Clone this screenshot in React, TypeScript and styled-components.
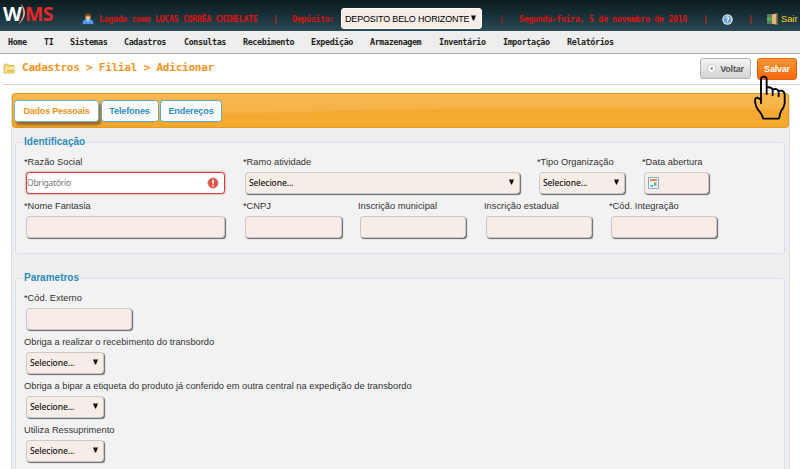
import React from "react";
import styled, { createGlobalStyle, css } from "styled-components";

const Global = createGlobalStyle`
  * { box-sizing: border-box; }
  body { margin: 0; background: #fff; overflow: hidden; font-family: "Liberation Sans", Arial, sans-serif; }
`;

const Page = styled.div`
  position: relative;
  width: 800px;
  height: 469px;
  overflow: hidden;
  background: #fff;
`;

const Header = styled.header`
  display: flex;
  height: 31px;
  padding-left: 3px;
  background: linear-gradient(#0b1c20, #152e34 45%, #2b4a54);
  white-space: nowrap;
`;

const Logo = styled.div`
  display: flex;
  align-items: flex-start;
  width: 79px;
  font: 700 19.5px/26px "Open Sans", sans-serif;
  letter-spacing: -0.8px;
  color: #e12a28;
  padding-top: 1px;
`;
const LogoLetter = styled.span`
  color: #fff;
`;
const LogoSwoosh = styled.svg`
  width: 7px;
  height: 20px;
  margin: 3px -1px 0 -2px;
`;

const HeaderItem = styled.div<{ $w: number; $top?: number }>`
  flex: none;
  width: ${(p) => p.$w}px;
  padding-top: ${(p) => p.$top ?? 0}px;

  > svg {
    display: block;
  }
`;

const HeaderText = styled.span<{ $plain?: boolean }>`
  display: block;
  font: ${(p) => (p.$plain ? 400 : 700)} 8.4px/12px "DejaVu Sans Mono", monospace;
  letter-spacing: -0.38px;
  color: #dc1212;
`;

const DepotSelect = styled.div`
  display: flex;
  justify-content: space-between;
  align-items: center;
  width: 141px;
  height: 21px;
  padding: 0 5px 0 3px;
  border-radius: 3px;
  border: 1px solid #fff;
  background: #f6ede6;
  font-size: 9px;
  letter-spacing: -0.17px;
  color: #000;
`;

const Exit = styled.span`
  display: block;
  font-size: 9.3px;
  line-height: 12px;
  color: #ffd21e;
`;

const Nav = styled.nav`
  display: flex;
  height: 23px;
  padding: 5px 0 0 8px;
  background: #eee;
  border-bottom: 1px solid #a9a9a9;
`;
const NavItem = styled.a<{ $w: number }>`
  flex: none;
  width: ${(p) => p.$w}px;
  font: 700 8.4px/12px "DejaVu Sans Mono", monospace;
  letter-spacing: -0.38px;
  color: #222;
  white-space: nowrap;
`;

const TitleBar = styled.div`
  display: flex;
  height: 31px;
  margin-left: 3px;
  border-bottom: 1px solid #d2d2d2;
`;
const Breadcrumb = styled.h1`
  flex: 1;
  margin: 7px 0 0 7px;
  font: 700 11px/14px "DejaVu Sans Mono", monospace;
  letter-spacing: -0.22px;
  color: #f7941d;
`;
const FolderIcon = styled.svg`
  width: 12px;
  height: 11px;
  margin-top: 9px;
`;

const Button = styled.button<{ $primary?: boolean }>`
  display: flex;
  align-items: center;
  justify-content: center;
  gap: 4px;
  padding: 0;
  border-radius: 3px;
  font: 700 9px "Liberation Sans", Arial, sans-serif;
  letter-spacing: -0.2px;
  ${(p) =>
    p.$primary
      ? css`
          width: 40px;
          height: 22px;
          margin: 4px 3px 0 6px;
          color: #fff;
          border: 1px solid #e2600d;
          background: linear-gradient(#fd9634, #f4680c);
        `
      : css`
          width: 51px;
          height: 21px;
          margin-top: 4px;
          color: #555;
          border: 1px solid #b4b4b4;
          background: linear-gradient(#f4f4f4, #d3d3d3);
        `}
`;

const Panel = styled.main`
  width: 779px;
  height: 378px;
  margin: 8px 0 0 11px;
  border: 1px solid #dedede;
  border-top: 0;
  border-radius: 3px 3px 0 0;
  background: #eee;
`;

const TabBar = styled.div`
  display: flex;
  gap: 1.5px;
  height: 35px;
  padding: 6px 0 0 1px;
  border: 1px solid #e59a20;
  border-radius: 3px;
  background:
    radial-gradient(ellipse 520px 20px at 75% 100%, #f5a930 90%, transparent 100%),
    linear-gradient(#f9b850, #f5b147 60%, #f4a62c);
`;
const Tab = styled.button<{ $w: number; $active?: boolean }>`
  width: ${(p) => p.$w}px;
  height: 22px;
  padding: 0;
  border: 1px solid ${(p) => (p.$active ? "#79b7c9" : "#5ba9c3")};
  border-radius: 3.5px;
  background: ${(p) => (p.$active ? "#fff" : "#fafafa")};
  box-shadow: ${(p) => (p.$active ? "2px 3px 3px rgba(110, 80, 40, 0.75)" : "none")};
  color: ${(p) => (p.$active ? "#ee931b" : "#2c8fc0")};
  font: 700 9px "Liberation Sans", Arial, sans-serif;
  letter-spacing: ${(p) => (p.$active ? -0.22 : -0.1)}px;
`;

const Fieldset = styled.section<{ $top: number; $h: number }>`
  width: 770px;
  height: ${(p) => p.$h}px;
  margin: ${(p) => p.$top}px 0 0 3px;
  padding-left: 8px;
  border: 1px solid #d5e1ee;
  border-radius: 3px;
  background: #f2f2f2;
`;
const Legend = styled.h2`
  display: table;
  margin: -8px 0 7px -1px;
  padding: 0 1px;
  background: linear-gradient(#eee 50%, #f2f2f2 50%);
  font: 700 10px/14px "Liberation Sans", Arial, sans-serif;
  color: #2b8bc0;
`;

const Row = styled.div`
  display: flex;
  height: 44px;
`;
const Field = styled.div<{ $span: number }>`
  flex: none;
  width: ${(p) => p.$span}px;
`;
const Label = styled.label`
  display: block;
  height: 16px;
  font-size: 9.3px;
  line-height: 13px;
  white-space: nowrap;
  color: #333;
`;

const Box = styled.div<{ $w: number; $kind: "required" | "optional" | "error" }>`
  display: flex;
  align-items: center;
  justify-content: space-between;
  width: ${(p) => p.$w}px;
  height: 22px;
  margin-left: 2px;
  padding: 0 5px 0 3px;
  border: 1px solid #c9c6c5;
  border-radius: 3.5px;
  background: ${(p) => (p.$kind === "required" ? "#f9ebe8" : "#f6ede6")};
  box-shadow: 1px 1px 1px #666;
  font: 500 8.5px/12px "Noto Sans", sans-serif;
  letter-spacing: -0.1px;
  color: #111;
  ${(p) =>
    p.$kind === "error" &&
    css`
      padding-left: 0;
      background: #fff;
      border-color: #cf3b42;
      box-shadow: 0 0 2px #d9484e;
      color: #777;
      letter-spacing: -0.25px;
      font-weight: 400;
    `}
`;

const Arrow = styled.svg`
  flex: none;
  width: 5px;
  height: 6px;
  margin-top: -2px;
`;
const Cursor = styled.svg`
  position: absolute;
  left: 752px;
  top: 74px;
  width: 36px;
  height: 48px;
`;

const Down = () => (
  <Arrow viewBox="0 0 5 6"><path d="M0 .5H5L3 5.5H2Z" fill="#111" /></Arrow>
);

const Select = ({ w }: { w: number }) => (
  <Box $w={w} $kind="optional">Selecione...<Down /></Box>
);

const UserIcon = () => (
  <svg width="12" height="12" viewBox="0 0 12 12">
    <path d="M.7 11Q.5 6.5 4 6.5H8Q11.5 6.5 11.3 11Z" fill="#5a9df0" stroke="#2d6fc9" strokeWidth=".5" />
    <path d="M4.5 6.3H7.5L6 8.5Z" fill="#fff" />
    <circle cx="6" cy="4" r="2.7" fill="#f1bd85" />
    <path d="M3 4Q2.8.6 6 .6T9 4Q7 3.8 6 2.8 5 3.8 3 4Z" fill="#8d4b16" />
  </svg>
);

const HelpIcon = () => (
  <svg width="11" height="11" viewBox="0 0 11 11">
    <circle cx="5.5" cy="5.5" r="5.2" fill="#dfeaf6" />
    <circle cx="5.5" cy="5.5" r="3.9" fill="#6c9fd8" />
    <path d="M4 4.4Q4.1 3 5.5 3T7 4.3Q7 5 5.6 5.7V6.4M5.6 7.2V8.2" fill="none" stroke="#fff" strokeWidth="1.1" />
  </svg>
);

const DoorIcon = () => (
  <svg width="12" height="12" viewBox="0 0 12 12">
    <path d="M1 1H10V11H1Z" fill="#69736d" />
    <path d="M6 1.5L10.5.3V11.7L6 10.5Z" fill="#dfb878" />
    <path d="M10.5.3H11.6V11.7H10.5Z" fill="#a9793e" />
    <path d="M.3 6.2L3.2 3.4V5H6V7.5H3.2V9Z" fill="#43b649" />
  </svg>
);

export default function App() {
  return (
    <Page>
      <Global />
      <Header>
        <Logo>
          <LogoLetter>W</LogoLetter>
          <LogoSwoosh viewBox="0 0 7 20">
            <path d="M2 0Q6.5 5 5.8 10T0 20Q4 14 4.4 9.5T2 0Z" fill="#f6dfdd" stroke="#c7645e" strokeWidth=".4" />
          </LogoSwoosh>
          MS
        </Logo>
        <HeaderItem $w={17} $top={13}><UserIcon /></HeaderItem>
        <HeaderItem $w={174} $top={13}><HeaderText>Logado como LUCAS CORRÊA CHINELATE</HeaderText></HeaderItem>
        <HeaderItem $w={19} $top={13}><HeaderText>|</HeaderText></HeaderItem>
        <HeaderItem $w={49} $top={13}><HeaderText>Depósito:</HeaderText></HeaderItem>
        <HeaderItem $w={158} $top={8}>
          <DepotSelect>DEPOSITO BELO HORIZONTE<Down /></DepotSelect>
        </HeaderItem>
        <HeaderItem $w={20} $top={13}><HeaderText $plain>|</HeaderText></HeaderItem>
        <HeaderItem $w={184} $top={13}><HeaderText>Segunda-feira, 5 de novembro de 2018</HeaderText></HeaderItem>
        <HeaderItem $w={19} $top={13}><HeaderText>|</HeaderText></HeaderItem>
        <HeaderItem $w={26} $top={14}><HelpIcon /></HeaderItem>
        <HeaderItem $w={18} $top={13}><HeaderText>|</HeaderText></HeaderItem>
        <HeaderItem $w={15} $top={13}><DoorIcon /></HeaderItem>
        <HeaderItem $w={18} $top={13}><Exit>Sair</Exit></HeaderItem>
      </Header>
      <Nav>
        <NavItem $w={36}>Home</NavItem>
        <NavItem $w={26}>TI</NavItem>
        <NavItem $w={54}>Sistemas</NavItem>
        <NavItem $w={60}>Cadastros</NavItem>
        <NavItem $w={59}>Consultas</NavItem>
        <NavItem $w={68}>Recebimento</NavItem>
        <NavItem $w={59}>Expedição</NavItem>
        <NavItem $w={69}>Armazenagem</NavItem>
        <NavItem $w={64}>Inventário</NavItem>
        <NavItem $w={64}>Importação</NavItem>
        <NavItem $w={60}>Relatórios</NavItem>
      </Nav>
      <TitleBar>
        <FolderIcon viewBox="0 0 12 11">
          <path d="M1 10V2.2L2 1.2H5L6 2.5H11V10Z" fill="#f5dc83" stroke="#d5a640" strokeWidth=".8" />
          <path d="M1.5 9.6L3 5H7L8 4H11V9.6Z" fill="#fff0ad" />
          <path d="M4 6.5H11V9.6H3Z" fill="#edc655" />
        </FolderIcon>
        <Breadcrumb>Cadastros &gt; Filial &gt; Adicionar</Breadcrumb>
        <Button>
          <svg width="9" height="9" viewBox="0 0 9 9">
            <circle cx="4.5" cy="4.5" r="4" fill="#fff" stroke="#c4c4c4" strokeWidth=".8" />
            <path d="M5.6 2.8V6.2L3 4.5Z" fill="#777" />
          </svg>
          Voltar
        </Button>
        <Button $primary>Salvar</Button>
      </TitleBar>
      <Panel>
        <TabBar>
          <Tab $w={85} $active>Dados Pessoais</Tab>
          <Tab $w={58}>Telefones</Tab>
          <Tab $w={62}>Endereços</Tab>
        </TabBar>
        <Fieldset $top={14} $h={112}>
          <Legend>Identificação</Legend>
          <Row>
            <Field $span={219}>
              <Label>*Razão Social</Label>
              <Box $w={199} $kind="error">
                Obrigatório
                <svg width="12" height="12" viewBox="0 0 12 12">
                  <circle cx="6" cy="6" r="5.2" fill="#dc5447" stroke="#ee9a8e" strokeWidth=".8" />
                  <path d="M6 2.8V6.7M6 7.8V9.3" stroke="#fff" strokeWidth="1.6" />
                </svg>
              </Box>
            </Field>
            <Field $span={294}><Label>*Ramo atividade</Label><Select w={275} /></Field>
            <Field $span={105}><Label>*Tipo Organização</Label><Select w={86} /></Field>
            <Field $span={90}>
              <Label>*Data abertura</Label>
              <Box $w={65} $kind="required">
                <svg width="11" height="12" viewBox="0 0 11 12">
                  <path d="M.5.5H10.5V11.5H.5Z" fill="#edf5fd" stroke="#7faee0" />
                  <path d="M2 2H9V4.2H2Z" fill="#f08b43" />
                  <path d="M2.5 8H5V10H2.5ZM6 5.5H8.5V9H6Z" fill="#72b681" />
                </svg>
              </Box>
            </Field>
          </Row>
          <Row>
            <Field $span={219}><Label>*Nome Fantasia</Label><Box $w={199} $kind="required" /></Field>
            <Field $span={115}><Label>*CNPJ</Label><Box $w={97} $kind="required" /></Field>
            <Field $span={126}><Label>Inscrição municipal</Label><Box $w={106} $kind="optional" /></Field>
            <Field $span={125}><Label>Inscrição estadual</Label><Box $w={106} $kind="optional" /></Field>
            <Field $span={120}><Label>*Cód. Integração</Label><Box $w={106} $kind="required" /></Field>
          </Row>
        </Fieldset>
        <Fieldset $top={24} $h={210}>
          <Legend>Parametros</Legend>
          <Row><Field $span={220}><Label>*Cód. Externo</Label><Box $w={106} $kind="required" /></Field></Row>
          <Row><Field $span={220}><Label>Obriga a realizar o recebimento do transbordo</Label><Select w={78} /></Field></Row>
          <Row><Field $span={420}><Label>Obriga a bipar a etiqueta do produto já conferido em outra central na expedição de transbordo</Label><Select w={78} /></Field></Row>
          <Row><Field $span={220}><Label>Utiliza Ressuprimento</Label><Select w={78} /></Field></Row>
        </Fieldset>
      </Panel>
      <Cursor viewBox="186 72 108 144">
        <g fill="none" stroke="#000" strokeWidth="5.5" strokeLinejoin="round" strokeLinecap="round">
          <path d="M213 160V88Q213 80 221.5 80T230 88V132M230 112Q246 110 248 120V136M248 118Q264 114 266 125V139M266 123Q282 119 284 133V160Q282 172 274 182Q270 190 267 206H219Q217 194 209 185Q196 172 195 152Q195 143 203 143L213 149" />
        </g>
      </Cursor>
    </Page>
  );
}
